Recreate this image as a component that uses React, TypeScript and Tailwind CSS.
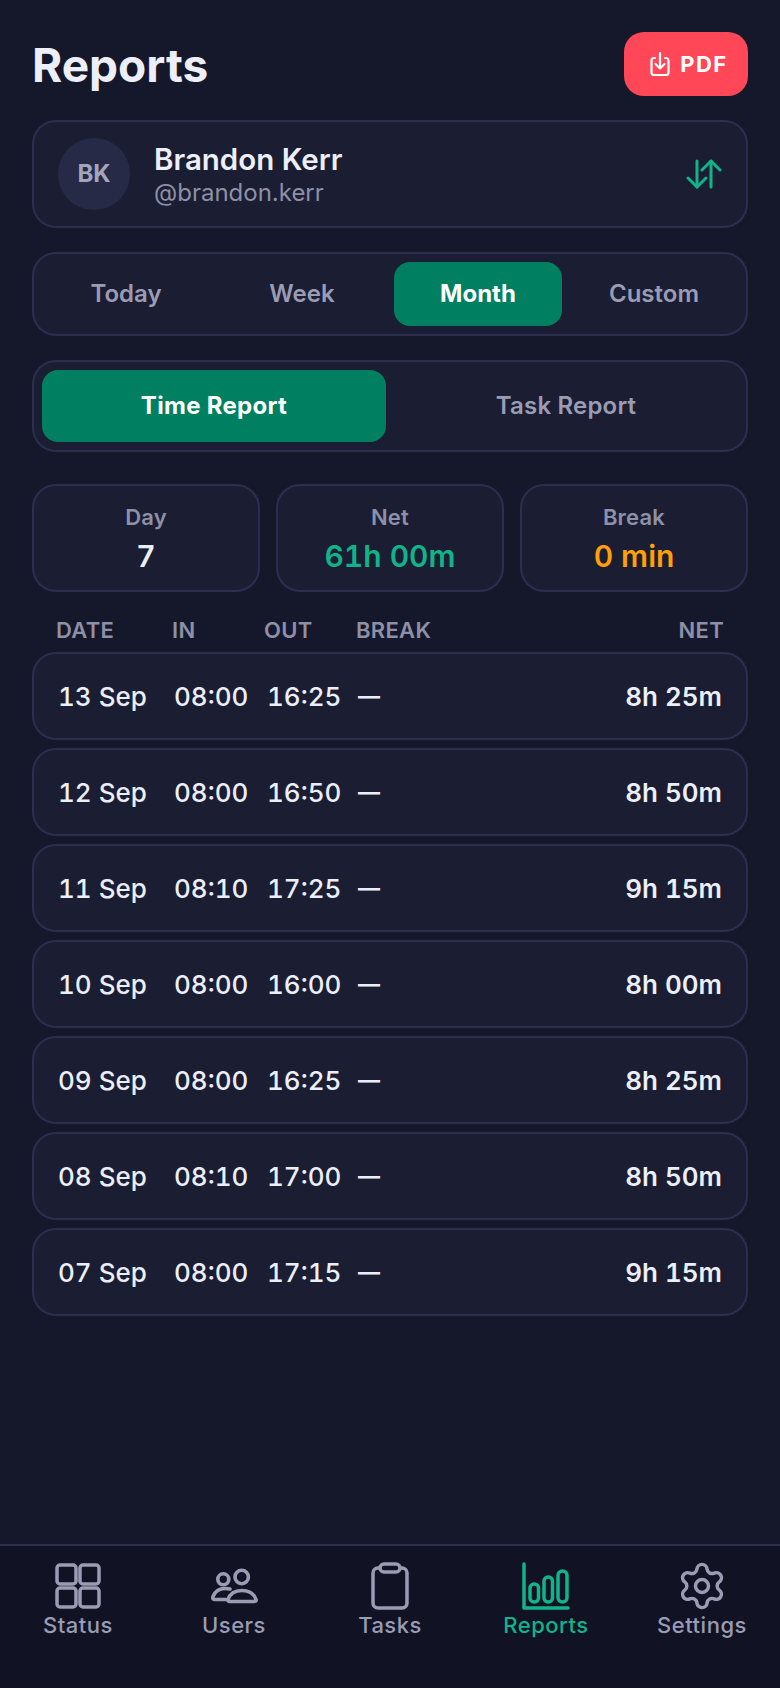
import { Settings } from "lucide-react";

const rows = [
  { date: "13 Sep", inTime: "08:00", out: "16:25", net: "8h 25m" },
  { date: "12 Sep", inTime: "08:00", out: "16:50", net: "8h 50m" },
  { date: "11 Sep", inTime: "08:10", out: "17:25", net: "9h 15m" },
  { date: "10 Sep", inTime: "08:00", out: "16:00", net: "8h 00m" },
  { date: "09 Sep", inTime: "08:00", out: "16:25", net: "8h 25m" },
  { date: "08 Sep", inTime: "08:10", out: "17:00", net: "8h 50m" },
  { date: "07 Sep", inTime: "08:00", out: "17:15", net: "9h 15m" },
];

function StatusIcon() {
  return (
    <svg width="46" height="46" viewBox="0 0 46 46" fill="none" stroke="currentColor" strokeWidth="3.5">
      <rect x="2" y="2" width="19" height="19" rx="3" />
      <rect x="25" y="2" width="19" height="19" rx="3" />
      <rect x="2" y="25" width="19" height="19" rx="3" />
      <rect x="25" y="25" width="19" height="19" rx="3" />
    </svg>
  );
}

function UsersIcon() {
  return (
    <svg width="50" height="46" viewBox="0 0 50 46" fill="none" stroke="currentColor" strokeWidth="3.6" strokeLinejoin="round" strokeLinecap="round">
      <circle cx="14.3" cy="16.3" r="5.5" />
      <circle cx="32.7" cy="14" r="6.7" />
      <path d="M21 26c-1-.3-3-.5-5-.5-6 0-10 3-12 8-.7 2 0 3 1.500 3H17" />
      <path d="M21 38.500h24.500c1.500 0 2-1 1.500-2-2-6-7-9-14-9s-12 3-14 9c-.5 1 0 2 2 2z" />
    </svg>
  );
}

function TasksIcon() {
  return (
    <svg width="38" height="48" viewBox="0 0 38 48" fill="none" stroke="currentColor" strokeWidth="3.5">
      <path d="M9 6H7a5 5 0 0 0-5 5v30a5 5 0 0 0 5 5h24a5 5 0 0 0 5-5V11a5 5 0 0 0-5-5h-2" />
      <rect x="9" y="2" width="20" height="8" rx="4" />
    </svg>
  );
}

function ReportsIcon() {
  return (
    <svg width="48" height="48" viewBox="0 0 48 48" fill="none" stroke="currentColor" strokeWidth="3.5" strokeLinecap="round" strokeLinejoin="round">
      <path d="M2 2v44h44" />
      <rect x="8" y="22" width="8.500" height="18" rx="4" />
      <rect x="22" y="15" width="8.500" height="25" rx="4" />
      <rect x="36" y="9" width="9" height="31" rx="4.500" />
    </svg>
  );
}

function SwapIcon() {
  return (
    <svg width="36" height="30" viewBox="0 0 36 30" fill="none" stroke="currentColor" strokeWidth="3" strokeLinecap="round" strokeLinejoin="round" className="text-[#10b38a]">
      <path d="M11 2v26" />
      <path d="M2 19l9 9 9-9" />
      <path d="M25 28V2" />
      <path d="M16 11l9-9 9 9" />
    </svg>
  );
}

function DownloadIcon() {
  return (
    <svg width="20" height="26" viewBox="0 0 20 26" fill="none" stroke="currentColor" strokeWidth="2.200" strokeLinecap="round" strokeLinejoin="round">
      <path d="M5 7H3.500A2.500 2.500 0 0 0 1.500 9.500v12A2.500 2.500 0 0 0 4 24h12a2.500 2.500 0 0 0 2.500-2.500v-12A2.500 2.500 0 0 0 16 7h-1" />
      <path d="M10 2v15" />
      <path d="M5.500 13l4.500 4.500 4.500-4.500" />
    </svg>
  );
}

export default function App() {
  const navItems = [
    { label: "Status", icon: <StatusIcon /> },
    { label: "Users", icon: <UsersIcon /> },
    { label: "Tasks", icon: <TasksIcon /> },
    { label: "Reports", icon: <ReportsIcon />, active: true },
    { label: "Settings", icon: <Settings size={52} strokeWidth={1.6} /> },
  ];

  return (
    <div className="flex h-[1688px] w-[780px] flex-col bg-[#15182b] font-['Inter',sans-serif] text-[#eceef8]">
      <main className="flex-1 px-8 pt-8">
        <header className="flex items-center justify-between">
          <h1 className="pt-0.5 text-[46px] leading-none font-bold">Reports</h1>
          <button className="flex h-16 w-[124px] items-center justify-center gap-2.5 rounded-[20px] bg-[#ff4757] pl-1.5 text-[22px] font-bold tracking-[1.5px] text-white">
            <DownloadIcon />
            PDF
          </button>
        </header>

        <section className="mt-6 flex h-[108px] items-center rounded-3xl border-2 border-[#2b2e4f] bg-[#1b1e33] pr-6 pl-6">
          <div className="flex h-[72px] w-[72px] items-center justify-center rounded-full bg-[#272a47] text-2xl font-bold text-[#a3a5bd]">
            BK
          </div>
          <div className="ml-6 flex-1 pt-0.5">
            <div className="text-[29.5px] leading-9 font-semibold">Brandon Kerr</div>
            <div className="text-2xl leading-8 text-[#8e90a8]">@brandon.kerr</div>
          </div>
          <SwapIcon />
        </section>

        <nav className="mt-6 grid h-[84px] grid-cols-4 gap-2 rounded-3xl border-2 border-[#2b2e4f] bg-[#1b1e33] p-2">
          {["Today", "Week", "Month", "Custom"].map((tab) => (
            <div
              key={tab}
              className={
                tab === "Month"
                  ? "flex items-center justify-center rounded-2xl bg-[#008060] text-2xl font-bold text-white"
                  : "flex items-center justify-center rounded-2xl text-2xl font-semibold text-[#9a9cb4]"
              }
            >
              {tab}
            </div>
          ))}
        </nav>

        <nav className="mt-6 flex h-[92px] rounded-3xl border-2 border-[#2b2e4f] bg-[#1b1e33] p-2">
          <div className="flex w-[344px] items-center justify-center rounded-2xl bg-[#008060] text-2xl font-bold tracking-[0.3px] text-white">
            Time Report
          </div>
          <div className="-mr-2 flex flex-1 items-center justify-center text-2xl font-semibold tracking-[0.2px] text-[#9a9cb4]">
            Task Report
          </div>
        </nav>

        <section className="mt-8 grid grid-cols-3 gap-4">
          <div className="flex h-[108px] flex-col items-center justify-center rounded-3xl border-2 border-[#2b2e4f] bg-[#1b1e33]">
            <div className="text-[22px] leading-8 font-semibold tracking-[0.2px] text-[#8e90a8]">Day</div>
            <div className="mt-[3px] text-[30px] leading-10 font-semibold tabular-nums">7</div>
          </div>
          <div className="flex h-[108px] flex-col items-center justify-center rounded-3xl border-2 border-[#2b2e4f] bg-[#1b1e33]">
            <div className="text-[22px] leading-8 font-semibold tracking-[0.2px] text-[#8e90a8]">Net</div>
            <div className="mt-[3px] text-[30px] leading-10 font-semibold text-[#10b38a] tabular-nums">61h 00m</div>
          </div>
          <div className="flex h-[108px] flex-col items-center justify-center rounded-3xl border-2 border-[#2b2e4f] bg-[#1b1e33]">
            <div className="text-[22px] leading-8 font-semibold tracking-[0.2px] text-[#8e90a8]">Break</div>
            <div className="mt-[3px] text-[30px] leading-10 font-semibold text-[#ff9f0a] tabular-nums">0 min</div>
          </div>
        </section>

        <div className="mt-6 flex h-9 items-start px-6 text-[22px] leading-7 font-semibold tracking-[0.3px] text-[#8e90a8]">
          <div className="w-[116px]">DATE</div>
          <div className="w-[92px]">IN</div>
          <div className="w-[92px]">OUT</div>
          <div className="flex-1">BREAK</div>
          <div>NET</div>
        </div>

        <div className="flex flex-col gap-2">
          {rows.map((row) => (
            <div
              key={row.date}
              className="flex h-[88px] items-center rounded-3xl border-2 border-[#2b2e4f] bg-[#1b1e33] px-6 text-[26px] font-medium tabular-nums"
            >
              <div className="w-[116px]">{row.date}</div>
              <div className="w-[93px]">{row.inTime}</div>
              <div className="w-[91px]">{row.out}</div>
              <div className="flex-1 text-[22px] font-bold">—</div>
              <div className="font-semibold">{row.net}</div>
            </div>
          ))}
        </div>
      </main>

      <footer className="grid h-[144px] grid-cols-5 border-t-2 border-[#2b2e4f] bg-[#111324] pt-4">
        {navItems.map((item) => (
          <div
            key={item.label}
            className={item.active ? "flex flex-col items-center text-[#10b38a]" : "flex flex-col items-center text-[#9a9cb4]"}
          >
            <div className="flex h-[48px] items-center justify-center">{item.icon}</div>
            <div className="text-[22px] leading-[30px] font-medium tracking-[0.5px]">{item.label}</div>
          </div>
        ))}
      </footer>
    </div>
  );
}
